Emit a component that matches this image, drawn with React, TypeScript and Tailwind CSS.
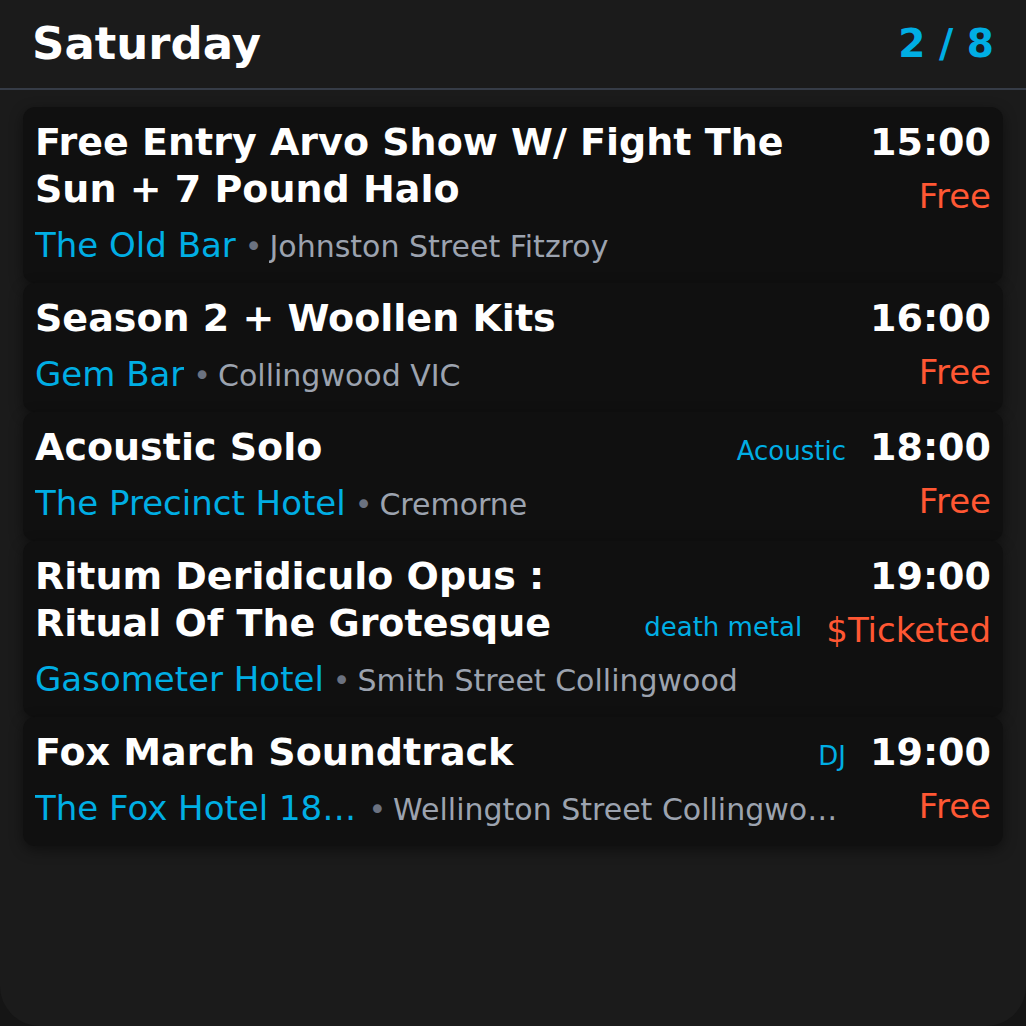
import React from 'react';

interface Gig {
  id: number;
  title: string;
  venue: string;
  address: string;
  time: string;
  price: string;
  genre?: string;
}

const gigs: Gig[] = [
  {
    id: 1,
    title: 'Free Entry Arvo Show W/ Fight The Sun + 7 Pound Halo',
    venue: 'The Old Bar',
    address: 'Johnston Street Fitzroy',
    time: '15:00',
    price: 'Free',
  },
  {
    id: 2,
    title: 'Season 2 + Woollen Kits',
    venue: 'Gem Bar',
    address: 'Collingwood VIC',
    time: '16:00',
    price: 'Free',
  },
  {
    id: 3,
    title: 'Acoustic Solo',
    venue: 'The Precinct Hotel',
    address: 'Cremorne',
    time: '18:00',
    price: 'Free',
    genre: 'Acoustic',
  },
  {
    id: 4,
    title: 'Ritum Deridiculo Opus : Ritual Of The Grotesque',
    venue: 'Gasometer Hotel',
    address: 'Smith Street Collingwood',
    time: '19:00',
    price: '$Ticketed',
    genre: 'death metal',
  },
  {
    id: 5,
    title: 'Fox March Soundtrack',
    venue: 'The Fox Hotel 1853 Bar & Bistro',
    address: 'Wellington Street Collingwood VIC',
    time: '19:00',
    price: 'Free',
    genre: 'DJ',
  },
];

const GigCard: React.FC<{ gig: Gig }> = ({ gig }) => (
  <div className="flex gap-6 rounded-xl bg-[#101010] p-3 shadow-[0_4px_14px_rgba(0,0,0,0.45)]">
    <div className="min-w-0 flex-1">
      <div className="flex items-end gap-4">
        <h3 className="flex-1 text-[38px] font-bold leading-[47px] text-white">{gig.title}</h3>
        {gig.genre && (
          <span className="shrink-0 text-[26px] leading-[40px] text-[#00aee4]">{gig.genre}</span>
        )}
      </div>
      {/* venue + address */}
      <div className="mt-2 flex items-baseline whitespace-nowrap leading-[48px]">
        <span className="max-w-[40%] truncate text-[34px] text-[#00aee4]">{gig.venue}</span>
        <span className="ml-[9px] text-[30px] text-[#6b7280]">•</span>
        <span className="ml-[7px] min-w-0 truncate text-[30px] text-[#9ca3af]">{gig.address}</span>
      </div>
    </div>
    <div className="flex shrink-0 flex-col items-end">
      <div className="text-[38px] font-bold leading-[47px] text-white">{gig.time}</div>
      <div className="mt-[2px] text-[34px] leading-[56px] text-[#ff5733]">{gig.price}</div>
    </div>
  </div>
);

export default function App() {
  return (
    <div className="min-h-screen bg-[#151515]" style={{ fontFamily: '"DejaVu Sans", sans-serif' }}>
      <div className="h-[1026px] w-full rounded-b-[40px] bg-[#1b1b1b]">
        <div className="flex items-center justify-between border-b-2 border-[#363c47] px-8 pb-[18px] pt-[18px]">
          <h1 className="text-[45px] font-bold leading-[52px] text-white">Saturday</h1>
          <span className="text-[39px] font-bold leading-[52px] text-[#00aee4]">2 / 8</span>
        </div>
        <div className="flex flex-col px-[23px] pt-[17px]">
          {gigs.map(g => (
            <GigCard key={g.id} gig={g} />
          ))}
        </div>
      </div>
    </div>
  );
}
